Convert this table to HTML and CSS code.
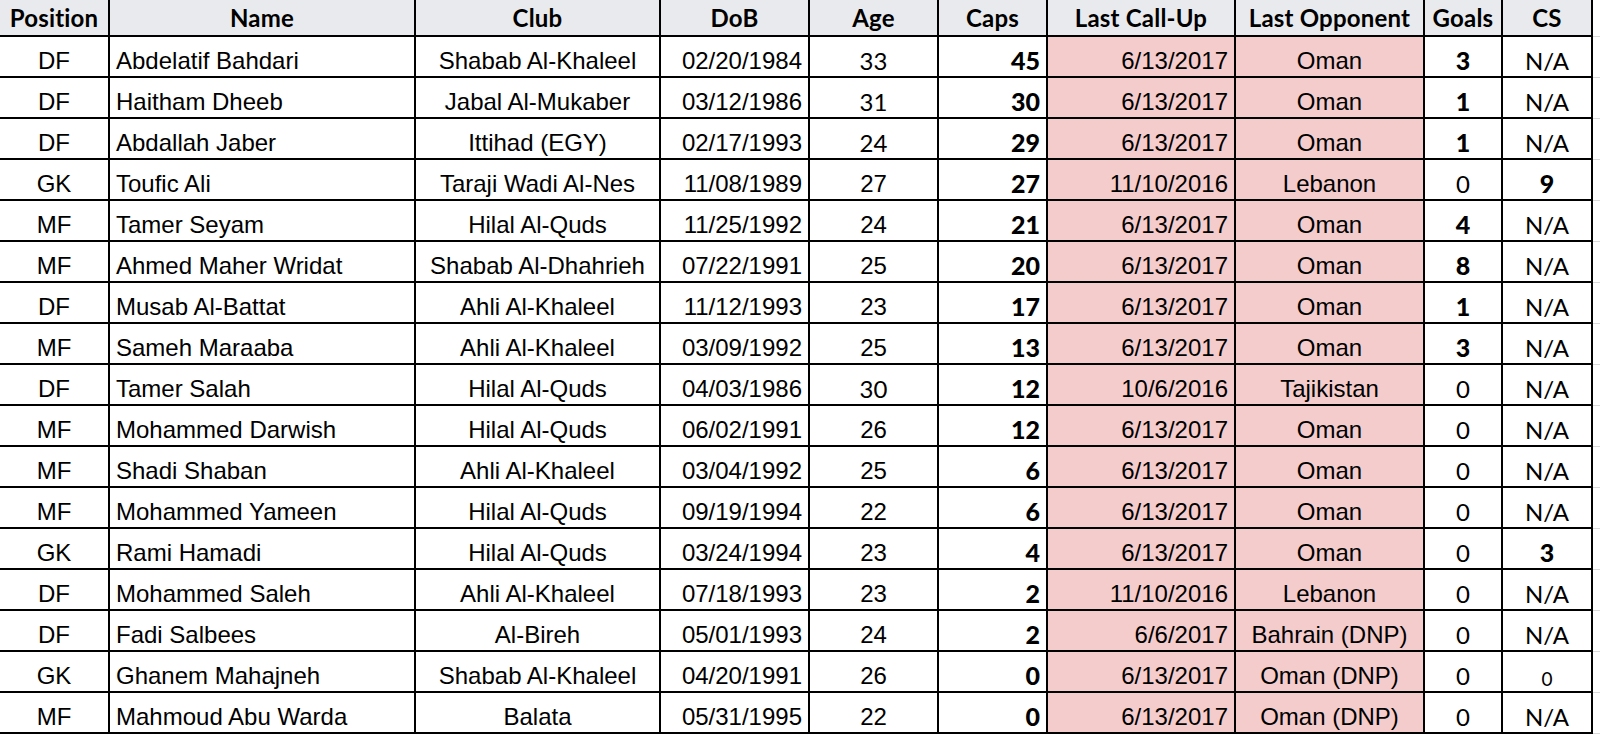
FILE: index.html
```html
<!DOCTYPE html>
<html>
<head>
<meta charset="utf-8">
<link rel="stylesheet" href="styles.css">
</head>
<body>
<table class="squad">
  <colgroup>
    <col class="c-pos"><col class="c-name"><col class="c-club"><col class="c-dob"><col class="c-age"><col class="c-caps"><col class="c-last"><col class="c-opp"><col class="c-goals"><col class="c-cs"><col class="c-pad">
  </colgroup>
  <thead>
    <tr>
      <th>Position</th><th>Name</th><th>Club</th><th>DoB</th><th>Age</th><th>Caps</th><th>Last Call-Up</th><th>Last Opponent</th><th>Goals</th><th>CS</th><th class="pad"></th>
    </tr>
  </thead>
  <tbody>
    <tr><td class="ctr">DF</td><td class="lft">Abdelatif Bahdari</td><td class="ctr">Shabab Al-Khaleel</td><td class="rgt">02/20/1984</td><td class="ctr alt">33</td><td class="rgt bold">45</td><td class="rgt pink">6/13/2017</td><td class="ctr pink">Oman</td><td class="ctr bold">3</td><td class="ctr alt">N/A</td><td class="pad"></td></tr>
    <tr><td class="ctr">DF</td><td class="lft">Haitham Dheeb</td><td class="ctr">Jabal Al-Mukaber</td><td class="rgt">03/12/1986</td><td class="ctr alt">31</td><td class="rgt bold">30</td><td class="rgt pink">6/13/2017</td><td class="ctr pink">Oman</td><td class="ctr bold">1</td><td class="ctr alt">N/A</td><td class="pad"></td></tr>
    <tr><td class="ctr">DF</td><td class="lft">Abdallah Jaber</td><td class="ctr">Ittihad (EGY)</td><td class="rgt">02/17/1993</td><td class="ctr alt">24</td><td class="rgt bold">29</td><td class="rgt pink">6/13/2017</td><td class="ctr pink">Oman</td><td class="ctr bold">1</td><td class="ctr alt">N/A</td><td class="pad"></td></tr>
    <tr><td class="ctr">GK</td><td class="lft">Toufic Ali</td><td class="ctr">Taraji Wadi Al-Nes</td><td class="rgt">11/08/1989</td><td class="ctr">27</td><td class="rgt bold">27</td><td class="rgt pink">11/10/2016</td><td class="ctr pink">Lebanon</td><td class="ctr alt">0</td><td class="ctr bold">9</td><td class="pad"></td></tr>
    <tr><td class="ctr">MF</td><td class="lft">Tamer Seyam</td><td class="ctr">Hilal Al-Quds</td><td class="rgt">11/25/1992</td><td class="ctr">24</td><td class="rgt bold">21</td><td class="rgt pink">6/13/2017</td><td class="ctr pink">Oman</td><td class="ctr bold">4</td><td class="ctr alt">N/A</td><td class="pad"></td></tr>
    <tr><td class="ctr">MF</td><td class="lft">Ahmed Maher Wridat</td><td class="ctr">Shabab Al-Dhahrieh</td><td class="rgt">07/22/1991</td><td class="ctr">25</td><td class="rgt bold">20</td><td class="rgt pink">6/13/2017</td><td class="ctr pink">Oman</td><td class="ctr bold">8</td><td class="ctr alt">N/A</td><td class="pad"></td></tr>
    <tr><td class="ctr">DF</td><td class="lft">Musab Al-Battat</td><td class="ctr">Ahli Al-Khaleel</td><td class="rgt">11/12/1993</td><td class="ctr">23</td><td class="rgt bold">17</td><td class="rgt pink">6/13/2017</td><td class="ctr pink">Oman</td><td class="ctr bold">1</td><td class="ctr alt">N/A</td><td class="pad"></td></tr>
    <tr><td class="ctr">MF</td><td class="lft">Sameh Maraaba</td><td class="ctr">Ahli Al-Khaleel</td><td class="rgt">03/09/1992</td><td class="ctr">25</td><td class="rgt bold">13</td><td class="rgt pink">6/13/2017</td><td class="ctr pink">Oman</td><td class="ctr bold">3</td><td class="ctr alt">N/A</td><td class="pad"></td></tr>
    <tr><td class="ctr">DF</td><td class="lft">Tamer Salah</td><td class="ctr">Hilal Al-Quds</td><td class="rgt">04/03/1986</td><td class="ctr alt">30</td><td class="rgt bold">12</td><td class="rgt pink">10/6/2016</td><td class="ctr pink">Tajikistan</td><td class="ctr alt">0</td><td class="ctr alt">N/A</td><td class="pad"></td></tr>
    <tr><td class="ctr">MF</td><td class="lft">Mohammed Darwish</td><td class="ctr">Hilal Al-Quds</td><td class="rgt">06/02/1991</td><td class="ctr">26</td><td class="rgt bold">12</td><td class="rgt pink">6/13/2017</td><td class="ctr pink">Oman</td><td class="ctr alt">0</td><td class="ctr alt">N/A</td><td class="pad"></td></tr>
    <tr><td class="ctr">MF</td><td class="lft">Shadi Shaban</td><td class="ctr">Ahli Al-Khaleel</td><td class="rgt">03/04/1992</td><td class="ctr">25</td><td class="rgt bold">6</td><td class="rgt pink">6/13/2017</td><td class="ctr pink">Oman</td><td class="ctr alt">0</td><td class="ctr alt">N/A</td><td class="pad"></td></tr>
    <tr><td class="ctr">MF</td><td class="lft">Mohammed Yameen</td><td class="ctr">Hilal Al-Quds</td><td class="rgt">09/19/1994</td><td class="ctr">22</td><td class="rgt bold">6</td><td class="rgt pink">6/13/2017</td><td class="ctr pink">Oman</td><td class="ctr alt">0</td><td class="ctr alt">N/A</td><td class="pad"></td></tr>
    <tr><td class="ctr">GK</td><td class="lft">Rami Hamadi</td><td class="ctr">Hilal Al-Quds</td><td class="rgt">03/24/1994</td><td class="ctr">23</td><td class="rgt bold">4</td><td class="rgt pink">6/13/2017</td><td class="ctr pink">Oman</td><td class="ctr alt">0</td><td class="ctr bold">3</td><td class="pad"></td></tr>
    <tr><td class="ctr">DF</td><td class="lft">Mohammed Saleh</td><td class="ctr">Ahli Al-Khaleel</td><td class="rgt">07/18/1993</td><td class="ctr">23</td><td class="rgt bold">2</td><td class="rgt pink">11/10/2016</td><td class="ctr pink">Lebanon</td><td class="ctr alt">0</td><td class="ctr alt">N/A</td><td class="pad"></td></tr>
    <tr><td class="ctr">DF</td><td class="lft">Fadi Salbees</td><td class="ctr">Al-Bireh</td><td class="rgt">05/01/1993</td><td class="ctr">24</td><td class="rgt bold">2</td><td class="rgt pink">6/6/2017</td><td class="ctr pink">Bahrain (DNP)</td><td class="ctr alt">0</td><td class="ctr alt">N/A</td><td class="pad"></td></tr>
    <tr><td class="ctr">GK</td><td class="lft">Ghanem Mahajneh</td><td class="ctr">Shabab Al-Khaleel</td><td class="rgt">04/20/1991</td><td class="ctr">26</td><td class="rgt bold">0</td><td class="rgt pink">6/13/2017</td><td class="ctr pink">Oman (DNP)</td><td class="ctr alt">0</td><td class="ctr alt small">0</td><td class="pad"></td></tr>
    <tr><td class="ctr">MF</td><td class="lft">Mahmoud Abu Warda</td><td class="ctr">Balata</td><td class="rgt">05/31/1995</td><td class="ctr">22</td><td class="rgt bold">0</td><td class="rgt pink">6/13/2017</td><td class="ctr pink">Oman (DNP)</td><td class="ctr alt">0</td><td class="ctr alt">N/A</td><td class="pad"></td></tr>
  </tbody>
</table>
</body>
</html>
```

FILE: styles.css
```css
html, body {
  margin: 0;
  padding: 0;
  background: #ffffff;
}

.squad {
  border-collapse: collapse;
  table-layout: fixed;
  width: 1600px;
  font-family: "Liberation Sans", Arial, sans-serif;
  font-size: 24px;
  color: #000000;
}

.c-pos { width: 109px; }
.c-name { width: 306px; }
.c-club { width: 245px; }
.c-dob { width: 149px; }
.c-age { width: 129px; }
.c-caps { width: 109px; }
.c-last { width: 188px; }
.c-opp { width: 189px; }
.c-goals { width: 78px; }
.c-cs { width: 90px; }
.c-pad { width: 8px; }

.squad th {
  height: 35px;
  padding: 0 1px;
  background: #e9eaed;
  font-family: Lato, "Open Sans", sans-serif;
  font-weight: 700;
  font-size: 24px;
  letter-spacing: 0.2px;
  text-align: center;
  white-space: nowrap;
  overflow: hidden;
  border-left: 2px solid #000;
  border-bottom: 2px solid #000;
}

.squad th:first-child,
.squad td:first-child {
  border-left: none;
}

.squad td {
  height: 41px;
  padding: 0 6px 1px 6px;
  box-sizing: border-box;
  white-space: nowrap;
  border-left: 2px solid #000;
  border-bottom: 2px solid #000;
  vertical-align: bottom;
}

.squad .pad,
.squad th.pad {
  background: #ffffff;
  border-bottom: 1px solid #d9d9d9;
  padding: 0;
}

.ctr { text-align: center; }
.lft { text-align: left; }
.rgt { text-align: right; }

.pink { background: #f4cccc; }

.bold {
  font-family: Lato, "Open Sans", sans-serif;
  font-weight: 900;
  font-size: 25px;
}

.alt {
  font-family: Lato, "Open Sans", sans-serif;
  font-weight: 400;
  font-size: 24px;
}

.small {
  font-size: 19px;
}
```
